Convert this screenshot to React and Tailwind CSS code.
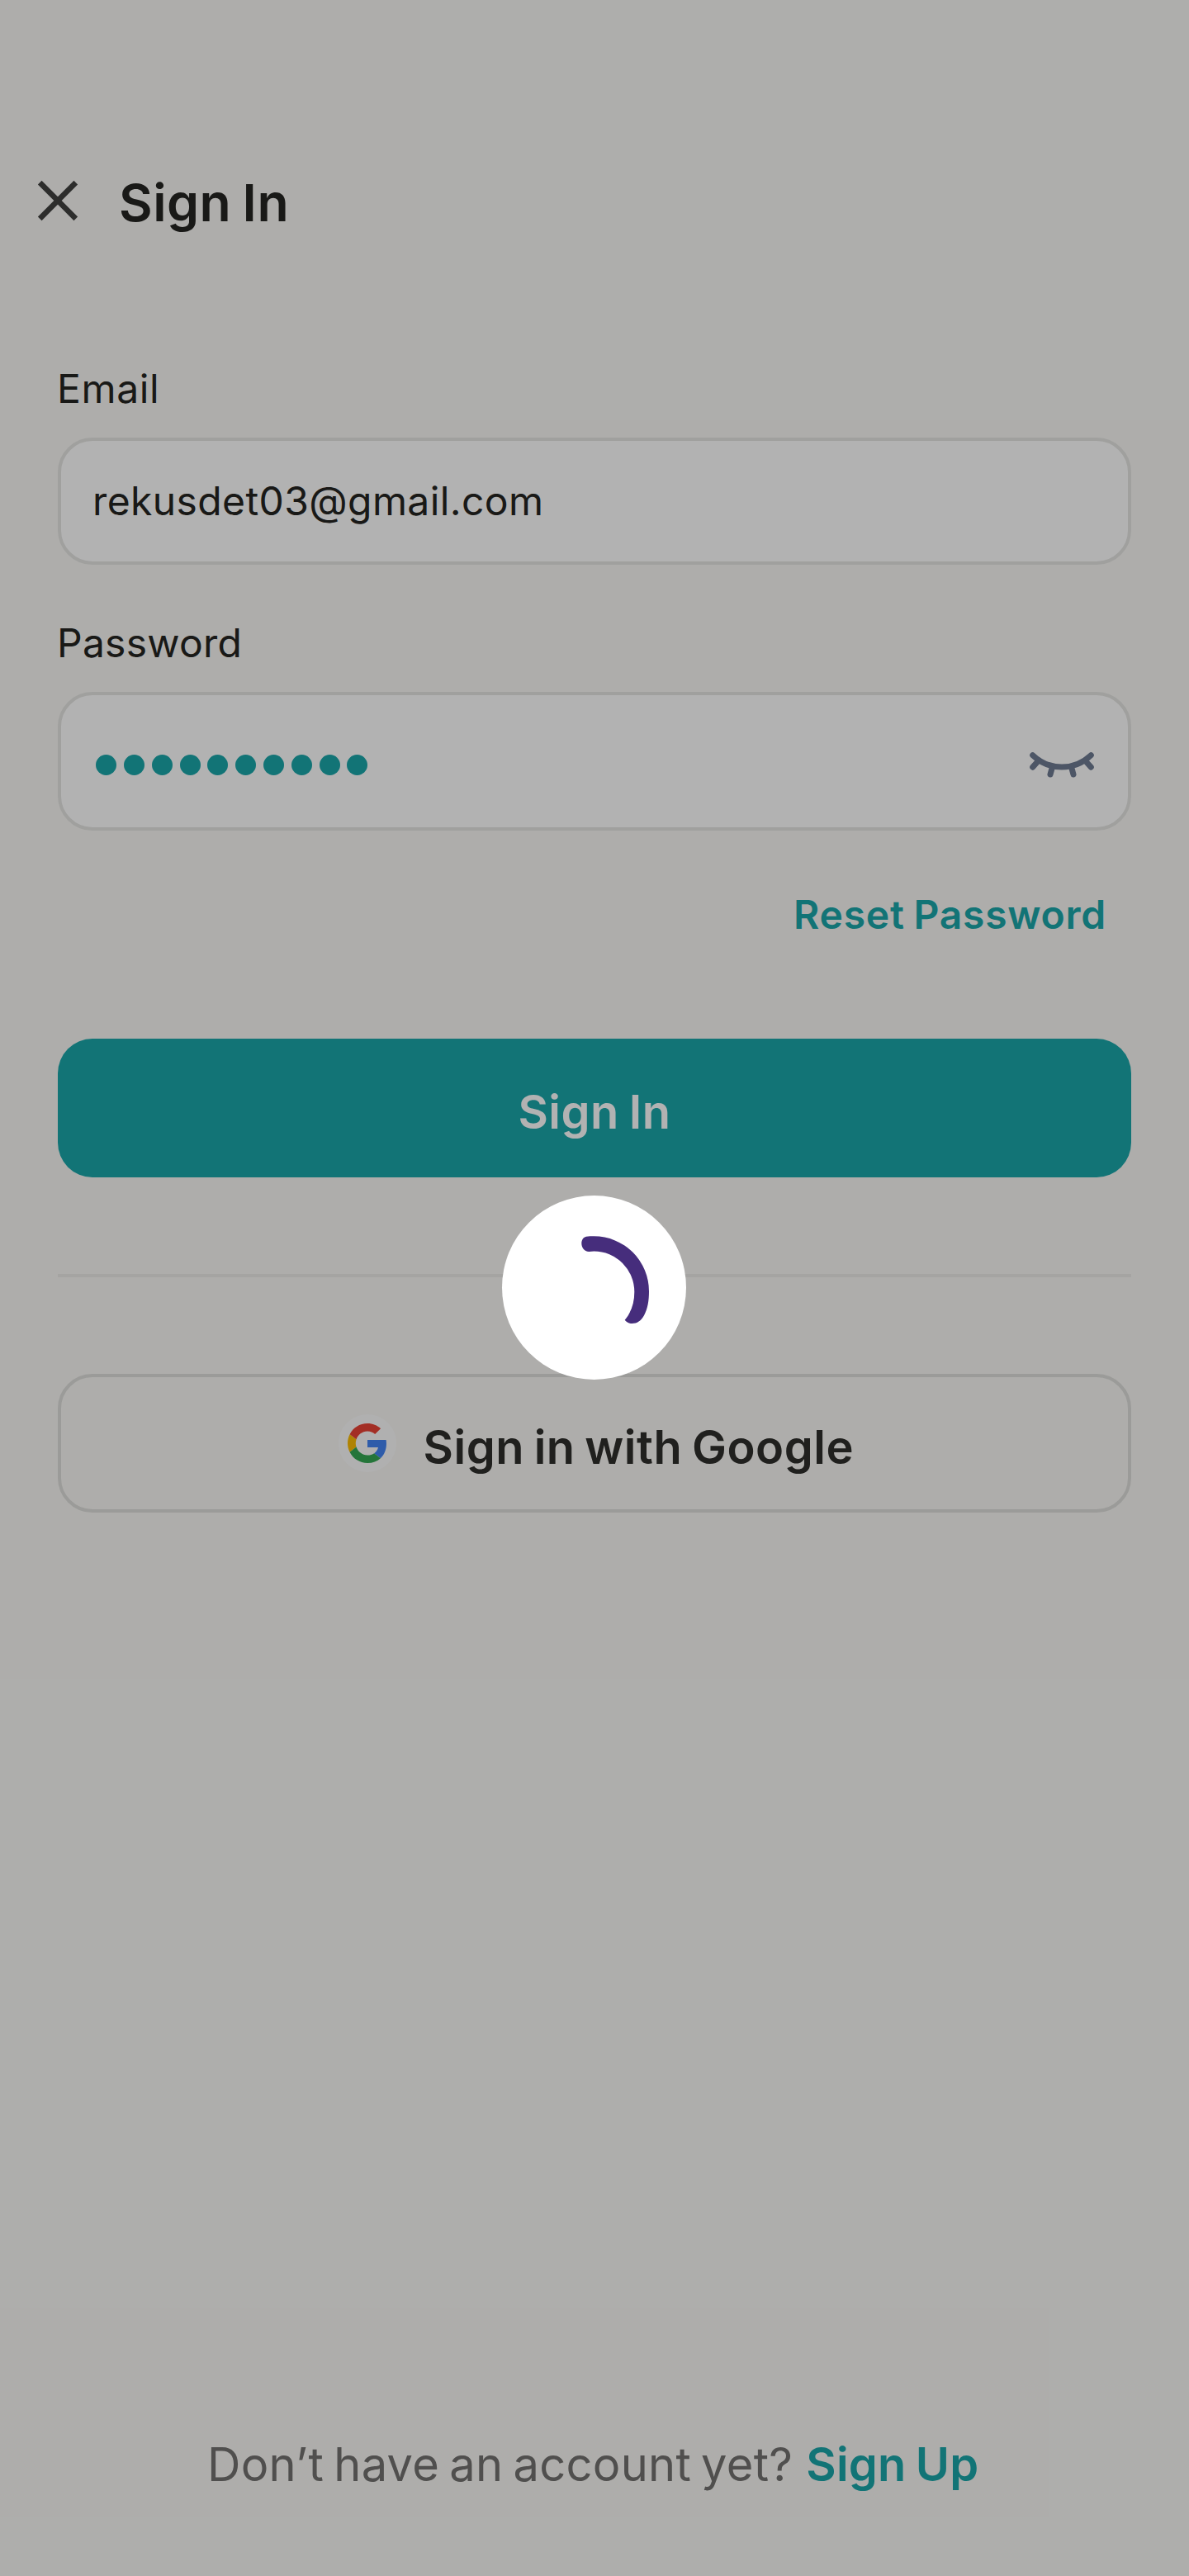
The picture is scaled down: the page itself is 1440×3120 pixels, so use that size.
function CloseIcon() {
  return (
    <svg className="h-[50px] w-[50px]" viewBox="0 0 50 50" fill="none" stroke="#414140" strokeWidth="6.6">
      <path d="M3.2 3.2 46.8 46.8M46.8 3.2 3.2 46.8" />
    </svg>
  );
}

function EyeClosedIcon() {
  return (
    <svg
      className="h-[84px] w-[84px]"
      viewBox="0 0 84 84"
      fill="none"
      stroke="#6f7b92"
      strokeWidth="7"
      strokeLinecap="round"
      strokeLinejoin="round"
    >
      <path d="M6.7 34.7C16.5 44 28.5 49 42 49S67.5 44 77.3 34.7" />
      <path d="M6.7 49.2 14 41M77.3 49.2 70 41M28 58l2.6-9.5M56 58l-2.6-9.5" />
    </svg>
  );
}

function GoogleLogo() {
  return (
    <svg className="h-12 w-12" viewBox="0 0 48 48">
      <path fill="#EA4335" d="M24 9.5c3.54 0 6.71 1.22 9.21 3.6l6.85-6.85C35.9 2.38 30.47 0 24 0 14.62 0 6.51 5.38 2.56 13.22l7.98 6.19C12.43 13.72 17.74 9.5 24 9.5z" />
      <path fill="#4285F4" d="M46.98 24.55c0-1.57-.15-3.09-.38-4.55H24v9.02h12.94c-.58 2.96-2.26 5.48-4.78 7.18l7.73 6c4.51-4.18 7.09-10.36 7.09-17.65z" />
      <path fill="#FBBC05" d="M10.53 28.59c-.48-1.45-.76-2.99-.76-4.59s.27-3.14.76-4.59l-7.98-6.19C.92 16.46 0 20.12 0 24c0 3.88.92 7.54 2.56 10.78l7.97-6.19z" />
      <path fill="#34A853" d="M24 48c6.48 0 11.93-2.13 15.89-5.81l-7.73-6c-2.15 1.45-4.92 2.3-8.16 2.3-6.26 0-11.57-4.22-13.47-9.91l-7.98 6.19C6.51 42.62 14.62 48 24 48z" />
    </svg>
  );
}

function LoadingOverlay() {
  return (
    <div className="absolute inset-0 flex items-center justify-center bg-black/30">
      <div className="mr-px mb-px h-[223px] w-[223px] rounded-full bg-white">
        <svg className="h-[223px] w-[223px]" viewBox="0 0 223 223" fill="#462d7c">
          <path d="M102 49.8C105 49.4 108 49.3 111.3 49.3A66.7 66.7 0 0 1 178 116C178 127 176.5 137 172 145.3C168.500 152 163.500 155 157.500 155C154 155 150.500 153.500 148.700 150.700C156.500 141.500 160.300 130 160.300 116.700A49 49 0 0 0 111.300 67.600L105.300 68C99.500 67.500 96.300 63 96.300 58C96.300 54 98.500 50.500 102 49.800Z" />
        </svg>
      </div>
    </div>
  );
}

const PASSWORD_LENGTH = 10;

export default function App() {
  return (
    <div className="relative flex h-[3120px] w-[1440px] flex-col overflow-hidden bg-[#f9f8f5] font-['Inter',sans-serif] text-[#252421]">
      <header className="mt-[205px] flex h-[80px] items-center pl-[45px]">
        <div className="-mt-1">
          <CloseIcon />
        </div>
        <h1 className="ml-[49px] text-[62.5px] leading-[80px] font-semibold tracking-[0.5px] [word-spacing:-3px]">Sign In</h1>
      </header>

      <main className="flex flex-col px-[70px] pt-[156px]">
        <label className="-ml-px text-[48px] leading-[60px] tracking-[0.63px]">Email</label>
        <div className="mt-[29px] flex h-[154px] items-center rounded-[42px] border-4 border-[#e5e5e3] bg-white pl-[38px] text-[48px] leading-[60px] tracking-[0.4px]">
          rekusdet03@gmail.com
        </div>

        <label className="mt-[65px] -ml-px text-[48px] leading-[60px] tracking-[0.25px]">Password</label>
        <div className="mt-[29px] flex h-[168px] items-center justify-between rounded-[42px] border-4 border-[#e5e5e3] bg-white pr-[38px] pl-[42.3px]">
          <div className="flex gap-[8.8px] pt-[9px]">
            {Array.from({ length: PASSWORD_LENGTH }, (_, i) => (
              <span key={i} className="h-[25px] w-[25px] rounded-full bg-[#1ba6aa]" />
            ))}
          </div>
          <EyeClosedIcon />
        </div>

        <a className="mt-[72px] mr-[30px] self-end text-[48px] leading-[60px] font-semibold tracking-[0.75px] text-[#1ba6aa] [word-spacing:-2px]">
          Reset Password
        </a>

        <button className="mt-[120px] flex h-[168px] items-center justify-center rounded-[42px] bg-[#1ba6aa] pt-[9px] text-[56px] leading-[70px] font-semibold tracking-[0.5px] text-white [word-spacing:-2.5px]">
          Sign In
        </button>

        <div className="mt-[117px] h-1 bg-[#ecebe8]" />

        <button className="mt-[117px] flex h-[168px] items-center rounded-[42px] border-4 border-[#dededb] pl-[336px]">
          <span className="flex h-[70px] w-[70px] items-center justify-center rounded-full bg-[#fdfdfd]">
            <GoogleLogo />
          </span>
          <span className="ml-[32.5px] pt-[9px] text-[56px] leading-[70px] font-semibold tracking-[0.54px] text-[#2f2e2b] [word-spacing:-3px]">
            Sign in with Google
          </span>
        </button>
      </main>

      <footer className="mt-auto mb-[100px] flex pl-[251px] text-[56px] leading-[70px]">
        <span className="tracking-[0.3px] text-[#737270] [word-spacing:-4px]">Don’t have an account yet?</span>
        <a className="ml-[16px] font-semibold tracking-[0.2px] text-[#1ba6aa] [word-spacing:-3px]">Sign Up</a>
      </footer>

      <LoadingOverlay />
    </div>
  );
}
